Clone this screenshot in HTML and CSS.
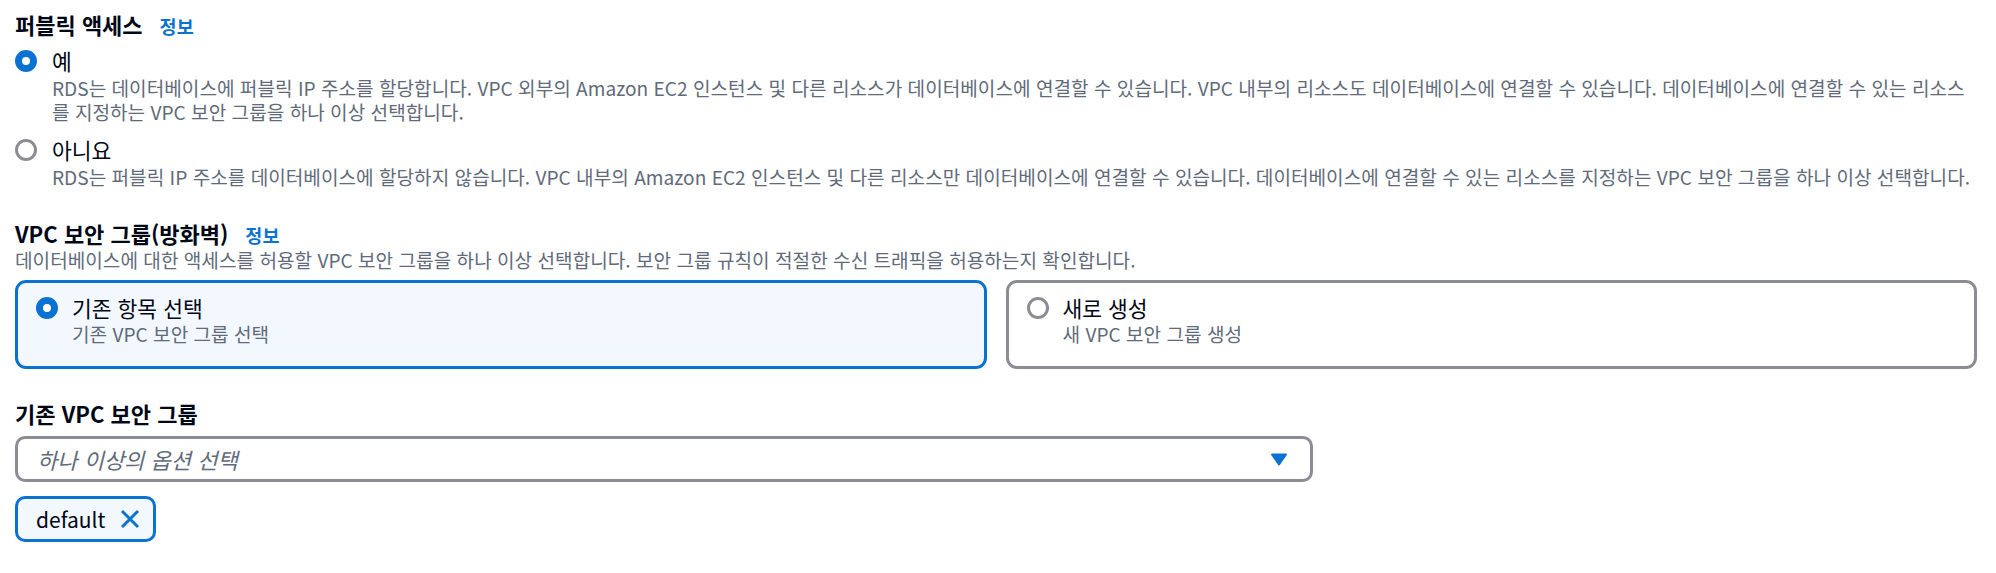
FILE: index.html
```html
<!DOCTYPE html>
<html lang="ko">
<head>
<meta charset="utf-8">
<title>RDS 연결</title>
<link rel="stylesheet" href="styles.css">
</head>
<body>
<div class="page">
  <section class="field">
    <div class="label-row"><span class="label">퍼블릭 액세스</span><a class="info">정보</a></div>
    <div class="radio-group">
      <div class="radio-item">
        <span class="radio checked"></span>
        <div class="radio-text">
          <div class="radio-label">예</div>
          <div class="desc">RDS는 데이터베이스에 퍼블릭 IP 주소를 할당합니다. VPC 외부의 Amazon EC2 인스턴스 및 다른 리소스가 데이터베이스에 연결할 수 있습니다. VPC 내부의 리소스도 데이터베이스에 연결할 수 있습니다. 데이터베이스에 연결할 수 있는 리소스를 지정하는 VPC 보안 그룹을 하나 이상 선택합니다.</div>
        </div>
      </div>
      <div class="radio-item second">
        <span class="radio"></span>
        <div class="radio-text">
          <div class="radio-label">아니요</div>
          <div class="desc">RDS는 퍼블릭 IP 주소를 데이터베이스에 할당하지 않습니다. VPC 내부의 Amazon EC2 인스턴스 및 다른 리소스만 데이터베이스에 연결할 수 있습니다. 데이터베이스에 연결할 수 있는 리소스를 지정하는 VPC 보안 그룹을 하나 이상 선택합니다.</div>
        </div>
      </div>
    </div>
  </section>

  <section class="field vpc">
    <div class="label-row"><span class="label">VPC 보안 그룹(방화벽)</span><a class="info">정보</a></div>
    <div class="desc field-desc">데이터베이스에 대한 액세스를 허용할 VPC 보안 그룹을 하나 이상 선택합니다. 보안 그룹 규칙이 적절한 수신 트래픽을 허용하는지 확인합니다.</div>
    <div class="tiles">
      <div class="tile selected">
        <span class="radio checked"></span>
        <div class="radio-text">
          <div class="radio-label">기존 항목 선택</div>
          <div class="desc">기존 VPC 보안 그룹 선택</div>
        </div>
      </div>
      <div class="tile">
        <span class="radio"></span>
        <div class="radio-text">
          <div class="radio-label">새로 생성</div>
          <div class="desc">새 VPC 보안 그룹 생성</div>
        </div>
      </div>
    </div>
  </section>

  <section class="field existing">
    <div class="label-row"><span class="label">기존 VPC 보안 그룹</span></div>
    <div class="select">
      <span class="placeholder">하나 이상의 옵션 선택</span>
      <svg class="caret" width="18" height="13" viewBox="0 0 18 13"><path d="M2 1.5h14l-7 10z" fill="#0972d3" stroke="#0972d3" stroke-width="2" stroke-linejoin="round"/></svg>
    </div>
    <div class="token">
      <span class="token-text">default</span>
      <svg class="dismiss" width="22" height="22" viewBox="0 0 22 22"><path d="M3 3l16 16M19 3L3 19" stroke="#0972d3" stroke-width="3" fill="none"/></svg>
    </div>
  </section>
</div>
</body>
</html>
```
FILE: styles.css
```css
html, body {
  margin: 0;
  padding: 0;
  background: #ffffff;
}

.page {
  padding: 10px 19px 0 15px;
  font-family: "Noto Sans CJK KR", "Noto Sans", sans-serif;
  color: #000716;
}

.label-row {
  display: flex;
  align-items: baseline;
  gap: 17px;
  height: 28px;
}

.label {
  font-size: 22px;
  font-weight: 700;
  line-height: 28px;
  color: #000716;
}

.info {
  font-size: 18.5px;
  font-weight: 700;
  color: #0972d3;
  line-height: 28px;
}

.radio-group {
  margin-top: 9px;
}

.radio-item {
  display: flex;
  gap: 15px;
}

.radio-item.second {
  margin-top: 12px;
}

.radio {
  flex: none;
  box-sizing: border-box;
  width: 22px;
  height: 22px;
  margin-top: 3px;
  border-radius: 50%;
  border: 3px solid #8c8c94;
  background: #ffffff;
}

.radio.checked {
  border: 7px solid #0972d3;
}

.radio-label {
  font-size: 21.5px;
  line-height: 28px;
  color: #000716;
}

.desc {
  font-size: 19.1px;
  line-height: 24px;
  color: #5f6b7a;
}

.radio-text .desc {
  margin-top: 1px;
}

.tile .radio-text .desc {
  margin-top: 0;
}

.field.vpc {
  margin-top: 30px;
}

.field-desc {
  margin-top: 1px;
}

.tiles {
  margin-top: 8px;
  display: grid;
  grid-template-columns: 1fr 1fr;
  gap: 19px;
}

.tile {
  display: flex;
  gap: 14px;
  border: 3px solid #8c8c94;
  border-radius: 11px;
  padding: 11px 17px 20px 18px;
  background: #ffffff;
}

.tile.selected {
  border-color: #0972d3;
  background: #f2f8fd;
}

.field.existing {
  margin-top: 30px;
}

.select {
  margin-top: 9px;
  box-sizing: border-box;
  width: 1298px;
  height: 46px;
  border: 3px solid #8c8c94;
  border-radius: 10px;
  padding: 0 22px 0 19px;
  display: flex;
  align-items: center;
  justify-content: space-between;
}

.placeholder {
  font-size: 22px;
  font-style: italic;
  color: #5f6b7a;
  line-height: 28px;
}

.caret {
  display: block;
}

.token {
  margin-top: 14px;
  box-sizing: border-box;
  height: 46px;
  display: inline-flex;
  align-items: center;
  gap: 14px;
  border: 3px solid #0972d3;
  border-radius: 10px;
  background: #f2f8fd;
  padding: 0 12px 0 18px;
}

.token-text {
  font-size: 21px;
  line-height: 28px;
  color: #000716;
}

.dismiss {
  display: block;
}
```
